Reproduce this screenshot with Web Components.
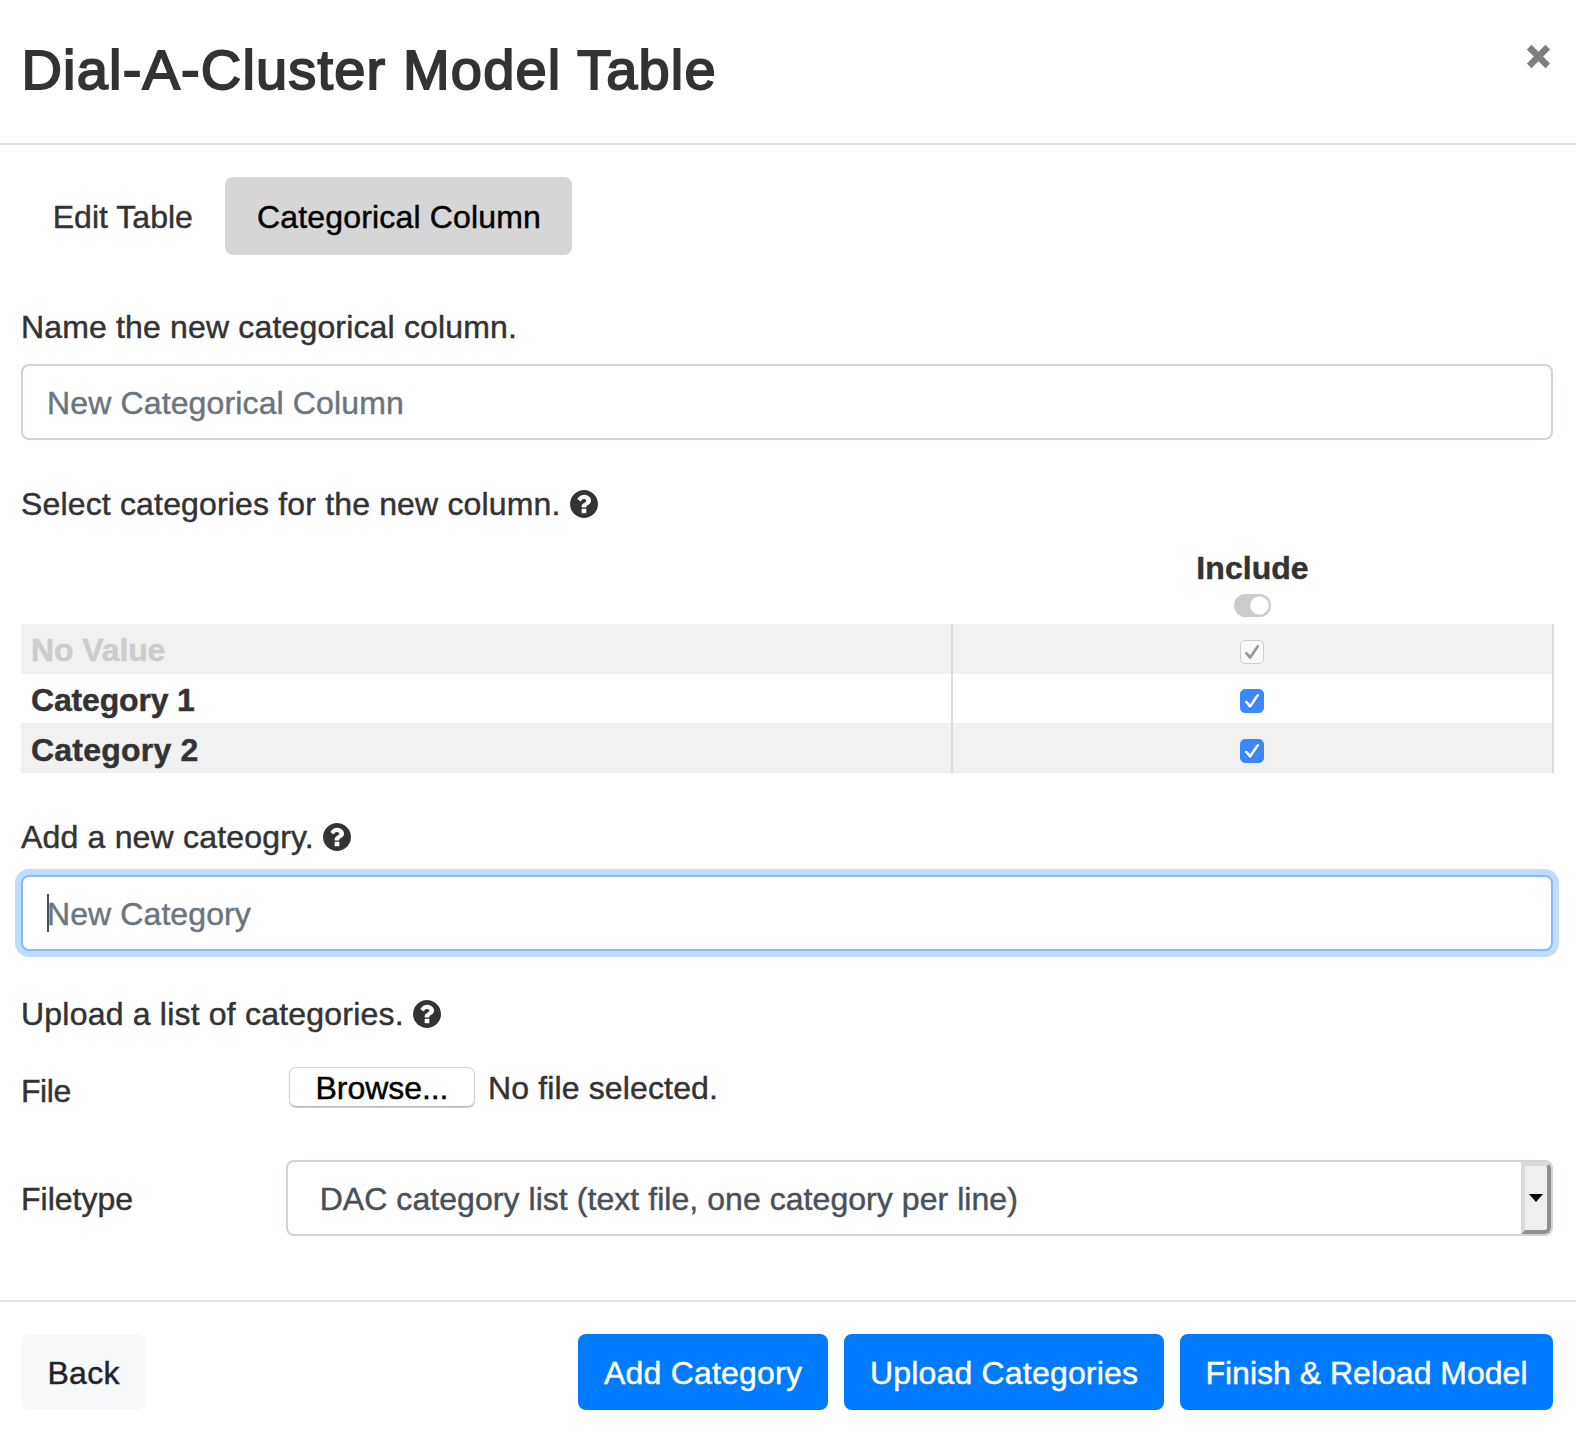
<!DOCTYPE html>
<html lang="en">
<head>
<meta charset="utf-8">
<title>Dial-A-Cluster Model Table</title>
<style>
html,body{margin:0;background:#fff}
body{font:32px/48px "Liberation Sans",Arial,sans-serif;color:#333}
</style>
</head>
<body>
<dac-dialog>
  <fit-text slot="title" ink="689">Dial-A-Cluster Model Table</fit-text>
  <dac-tab slot="tabs"><fit-text ink="138">Edit Table</fit-text></dac-tab>
  <dac-tab slot="tabs" active><fit-text ink="281">Categorical Column</fit-text></dac-tab>

  <dac-label style="margin-top:48px"><fit-text ink="491">Name the new categorical column.</fit-text></dac-label>
  <dac-input style="margin-top:13px"><fit-text ink="353">New Categorical Column</fit-text></dac-input>

  <dac-label help style="margin-top:40px"><fit-text ink="535.5">Select categories for the new column.</fit-text></dac-label>
  <dac-table style="margin-top:16px">
    <fit-text slot="head" ink="109.5" bold>Include</fit-text>
    <dac-row off><fit-text ink="131.6" bold>No Value</fit-text></dac-row>
    <dac-row style="--h:49px;--bg:#fff"><fit-text ink="162" bold>Category 1</fit-text></dac-row>
    <dac-row style="--shift:1px"><fit-text ink="165.5" bold>Category 2</fit-text></dac-row>
  </dac-table>

  <dac-label help style="margin-top:40px"><fit-text ink="289.8">Add a new cateogry.</fit-text></dac-label>
  <dac-input focused style="margin-top:14px"><fit-text ink="201.8">New Category</fit-text></dac-input>

  <dac-label help style="margin-top:39px"><fit-text ink="377.7">Upload a list of categories.</fit-text></dac-label>
  <dac-field style="margin-top:29px">
    <fit-text slot="label" ink="47.5">File</fit-text>
    <dac-file><fit-text ink="128" slot="button">Browse...</fit-text><fit-text ink="225">No file selected.</fit-text></dac-file>
  </dac-field>
  <dac-field style="margin-top:60px">
    <fit-text slot="label" ink="109.3">Filetype</fit-text>
    <dac-select><fit-text ink="694.5">DAC category list (text file, one category per line)</fit-text></dac-select>
  </dac-field>

  <dac-button slot="back" light style="width:125px"><fit-text ink="71">Back</fit-text></dac-button>
  <dac-button slot="actions" style="width:250px"><fit-text ink="198">Add Category</fit-text></dac-button>
  <dac-button slot="actions" style="width:320px"><fit-text ink="265">Upload Categories</fit-text></dac-button>
  <dac-button slot="actions" style="width:373px"><fit-text ink="318">Finish &amp; Reload Model</fit-text></dac-button>
</dac-dialog>

<script>
const define = (name, html, setup) => customElements.define(name, class extends HTMLElement {
  constructor() {
    super();
    const t = document.createElement('template');
    t.innerHTML = html;
    this.attachShadow({mode: 'open'}).append(t.content.cloneNode(true));
  }
  connectedCallback() { if (setup) setup(this); }
});

define('dac-dialog', `
<style>
:host{display:flex;flex-direction:column;box-sizing:border-box;width:1576px;height:1436px;overflow:hidden}
header{display:flex;justify-content:space-between;align-items:flex-start;box-sizing:border-box;height:145px;padding:28px 25px 0 21.5px;border-bottom:2px solid #dee2e6}
h4{--stroke:1.9px;margin:0;font-size:56px;line-height:84px;font-weight:400}
header svg{display:block;margin-top:16px}
main{box-sizing:border-box;height:1155px;padding:32px 23px 0 21px}
nav{display:flex}
footer{display:flex;justify-content:space-between;border-top:2px solid #dee2e6;padding:32px 23px 0 21px}
.actions{display:flex;gap:16px}
</style>
<header><h4><slot name="title"></slot></h4>
<svg width="25" height="25" viewBox="0 0 25 25"><path d="M3.2 3.2L21.8 21.8M21.8 3.2L3.2 21.8" stroke="#7f7f7f" stroke-width="6.6"/></svg></header>
<main><nav><slot name="tabs"></slot></nav><slot></slot></main>
<footer><slot name="back"></slot><div class="actions"><slot name="actions"></slot></div></footer>`);

define('dac-tab', `
<style>
:host{display:block;box-sizing:border-box;height:78px;padding:16px 0 0 31.7px;width:204px;border-radius:8px;white-space:nowrap}
:host([active]){width:347px;background:#d6d6d6;color:#000;padding-left:32px}
</style><slot></slot>`);

define('dac-label', `
<style>
:host{display:flex;height:48px;white-space:nowrap}
svg{display:none;width:28px;height:28px;margin:9.5px 0 0 9.3px}
:host([help]) svg{display:block}
</style><slot></slot>
<svg viewBox="0 128 1536 1536" fill="#333"><path d="M896 1376v-192q0-14-9-23t-23-9h-192q-14 0-23 9t-9 23v192q0 14 9 23t23 9h192q14 0 23-9t9-23zm256-672q0-88-55.5-163t-138.5-116-170-41q-243 0-371 213-15 24 8 42l132 100q7 6 19 6 16 0 25-12 53-68 86-92 34-24 86-24 48 0 85.5 26t37.5 59q0 38-20 61t-68 45q-63 28-115.5 86.5t-52.5 125.5v36q0 14 9 23t23 9h192q14 0 23-9t9-23q0-19 21.5-49.5t54.5-49.5q32-18 49-28.5t46-35 44.5-48 28-60.5 12.5-81zm384 192q0 209-103 385.5t-279.5 279.5-385.5 103-385.5-103-279.5-279.5-103-385.5 103-385.5 279.5-279.5 385.5-103 385.5 103 279.5 279.5 103 385.5z"/></svg>`);

define('dac-input', `
<style>
:host{display:block;position:relative;box-sizing:border-box;height:76px;border:2px solid #ced4da;border-radius:8px;padding:13px 24px 0;color:#6c757d;background:#fff}
:host([focused]){border-color:#80bdff;box-shadow:0 0 0 6px #bfdeff}
i{display:none;position:absolute;left:24px;top:17px;width:2px;height:38px;background:#495057}
:host([focused]) i{display:block}
</style><slot></slot><i></i>`);

define('dac-table', `
<style>
:host{display:block;margin-right:-1px}
.head{display:flex;flex-direction:column;align-items:center;box-sizing:border-box;width:601px;height:80px;margin-left:931px}
.head svg{display:block;margin-top:2px}
</style>
<div class="head"><slot name="head"></slot>
<svg width="37" height="23" viewBox="0 0 37 23"><rect width="37" height="23" rx="11.5" fill="#ccc"/><circle cx="25.5" cy="11.5" r="9.3" fill="#fff"/></svg></div>
<slot></slot>`);

define('dac-row', `
<style>
:host{display:flex;height:var(--h,50px);background:var(--bg,#f1f1f1);white-space:nowrap}
.name{box-sizing:border-box;width:930px;padding:calc(2px + var(--shift,0px)) 0 0 10px}
:host([off]) .name{color:#ccc}
.check{flex:1;display:flex;justify-content:center;align-items:flex-start;border:solid #dcdcdc;border-width:0 2px;height:100%;box-sizing:border-box;padding-right:2px}
svg{display:block;margin-top:calc(15px + var(--shift,0px))}
.box{fill:#3b88fd}.tick{stroke:#fff;filter:drop-shadow(0 1px .5px #1c5fc4)}
:host([off]) svg{margin-top:16px}
:host([off]) .box{fill:#f8f8f8;stroke:#ccc}
:host([off]) .tick{stroke:#999;filter:none}
</style>
<div class="name"><slot></slot></div>
<div class="check"><svg width="24" height="24" viewBox="0 0 24 24"><rect class="box" x=".5" y=".5" width="23" height="23" rx="4.5" stroke="#3b88fd"/><path class="tick" d="M6.3 13.2L10.2 17.5L17.8 6.3" fill="none" stroke-width="2.7" stroke-linecap="round" stroke-linejoin="round"/></svg></div>`);

define('dac-field', `
<style>
:host{display:flex;align-items:flex-start}
.label{width:265px;height:48px}
.control{flex:1}
</style><div class="label"><slot name="label"></slot></div><div class="control"><slot></slot></div>`);

define('dac-file', `
<style>
:host{display:flex;gap:13px;height:40px;white-space:nowrap}
.button{display:flex;justify-content:center;box-sizing:border-box;width:186px;height:40px;margin-left:3px;background:#fff;border:1px solid #d4d4d4;border-bottom-color:#b8b8b8;border-radius:7px;box-shadow:0 1px 1px #ccc;color:#000}
.button slot{display:block;margin-top:-4px}
.name{margin-top:-3px}
</style><div class="button"><slot name="button"></slot></div><div class="name"><slot></slot></div>`);

define('dac-select', `
<style>
:host{display:flex;justify-content:space-between;box-sizing:border-box;height:76px;margin-top:-15px;border:2px solid #ced4da;border-radius:8px;overflow:hidden;color:#495057;white-space:nowrap}
.value{padding:13px 0 0 31.7px}
.arrow{display:flex;align-items:center;justify-content:center;box-sizing:border-box;width:30px;height:72px;background:#efefef;border:4px solid;border-color:#dadada #919191 #919191 #dadada;border-radius:0 6px 6px 0}
svg{display:block}
</style><div class="value"><slot></slot></div>
<div class="arrow"><svg width="14" height="8" viewBox="0 0 14 8"><path d="M0 0H14L7 8Z"/></svg></div>`);

define('dac-button', `
<style>
:host{display:flex;justify-content:center;box-sizing:border-box;height:76px;padding-top:15px;border-radius:8px;background:#007bff;color:#fff;white-space:nowrap}
:host([light]){background:#f8f9fa;color:#212529}
</style><slot></slot>`);

/* Spaces its letters so that the drawn width of the line equals the "ink" attribute. */
define('fit-text', `
<style>
:host{display:inline-block;white-space:nowrap;-webkit-text-stroke:var(--stroke,.45px) currentColor}
:host([bold]){font-weight:700}
</style><slot></slot>`, el => {
  const style = getComputedStyle(el), text = el.textContent;
  const pen = document.createElement('canvas').getContext('2d');
  pen.font = `${style.fontWeight} ${style.fontSize} "Liberation Sans"`;
  const m = pen.measureText(text);
  const gap = (el.getAttribute('ink') - m.actualBoundingBoxLeft - m.actualBoundingBoxRight) / (text.length - 1);
  el.style.letterSpacing = gap.toFixed(3) + 'px';
  el.style.marginRight = (-gap).toFixed(3) + 'px';
});
</script>
</body>
</html>
